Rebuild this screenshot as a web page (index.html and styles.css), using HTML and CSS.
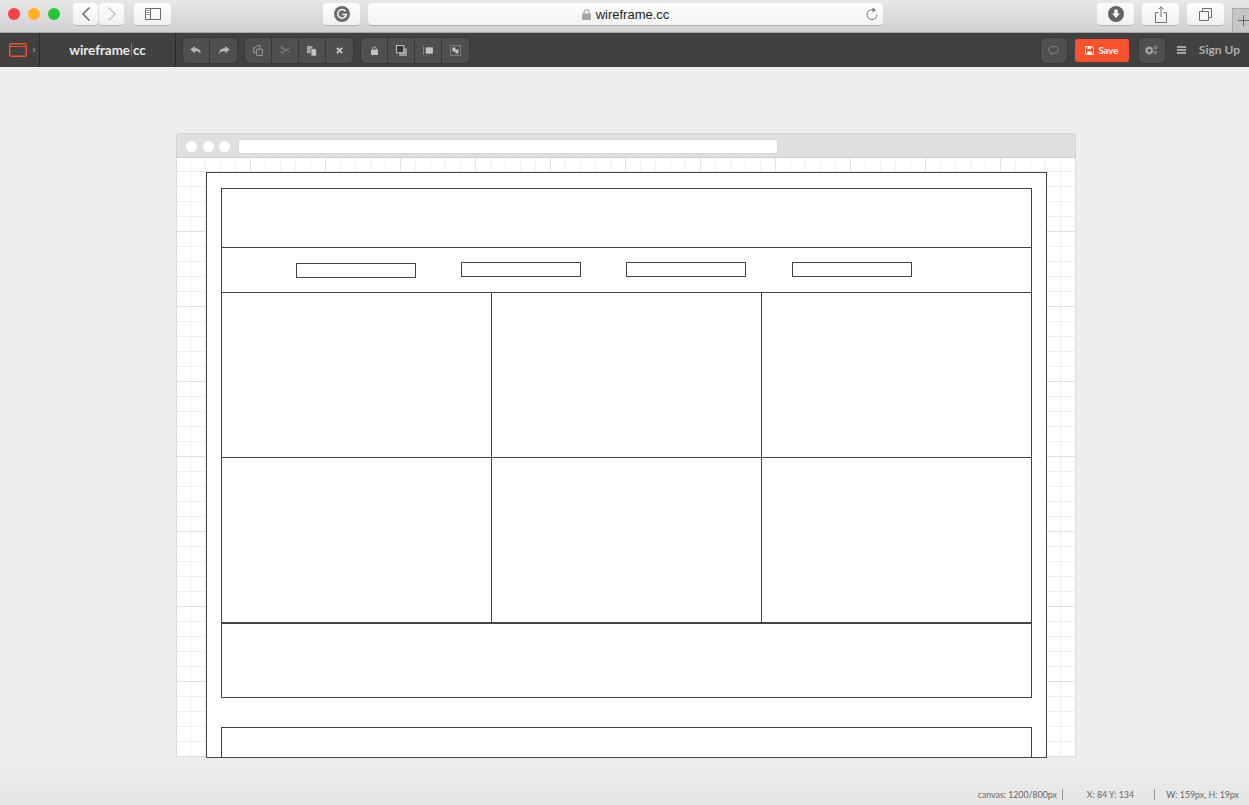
FILE: index.html
```html
<!DOCTYPE html>
<html lang="en">
<head>
  <meta charset="UTF-8">
  <title>wireframe.cc</title>
  <link rel="stylesheet" href="styles.css">
</head>
<body>
  <!-- safari chrome -->
  <header class="safari">
    <div class="lights">
      <span class="light red"></span>
      <span class="light yellow"></span>
      <span class="light green"></span>
    </div>
    <div class="nav-pair">
      <button class="sbtn nav-btn"><svg width="12" height="16" viewBox="0 0 12 16"><path d="M9.500 1.500 3 8l6.500 6.500" fill="none" stroke="#6e6e6e" stroke-width="1.500"/></svg></button>
      <button class="sbtn nav-btn"><svg width="12" height="16" viewBox="0 0 12 16"><path d="M2.500 1.500 9 8l-6.500 6.500" fill="none" stroke="#c4c4c4" stroke-width="1.500"/></svg></button>
    </div>
    <button class="sbtn wide sidebar-btn"><svg width="16" height="12" viewBox="0 0 16 12"><path d="M.5.5h15v11H.5zM5.500.5v11" fill="none" stroke="#6a6a6a"/><path d="M1.500 2.500h3M1.500 4.500h3M1.500 6.500h3" stroke="#8a8a8a"/></svg></button>
    <button class="sbtn wide g-btn"><svg width="16" height="16" viewBox="0 0 16 16"><circle cx="8" cy="8" r="8" fill="#6b6b6b"/><path d="M11.500 5.200A4.300 4.300 0 1 0 12.300 8.500H8.500" fill="none" stroke="#f4f4f4" stroke-width="1.500"/></svg></button>
    <div class="urlbar">
      <span class="url-text"><svg width="9" height="11" viewBox="0 0 9 11"><path d="M2 5V3.300a2.500 2.500 0 0 1 5 0V5" fill="none" stroke="#9c9c9c" stroke-width="1.100"/><rect y="4.500" width="9" height="6.500" rx=".8" fill="#a5a5a5"/></svg>wireframe.cc</span>
      <svg class="reload" width="12" height="14" viewBox="0 0 12 14"><path d="M8.700 3.400A5 5 0 1 0 11 7.500" fill="none" stroke="#777" stroke-width="1"/><path d="M6.500 0.500 10 3 6.500 5.500z" fill="#777"/></svg>
    </div>
    <div class="safari-right">
      <button class="sbtn wide"><svg width="16" height="16" viewBox="0 0 16 16"><circle cx="8" cy="8" r="8" fill="#636363"/><path d="M6.300 3.500h3.400v4h2.300L8 12 4 7.500h2.300z" fill="#f5f5f5"/></svg></button>
      <button class="sbtn wide"><svg width="12" height="17" viewBox="0 0 12 17"><path d="M3.500 6.500H.5v10h11v-10h-3" fill="none" stroke="#6e6e6e"/><path d="M6 11V1M3.500 3.300 6 .8l2.500 2.500" fill="none" stroke="#6e6e6e"/></svg></button>
      <button class="sbtn wide"><svg width="13" height="13" viewBox="0 0 13 13"><path d="M.5 3.500h9v9h-9z" fill="none" stroke="#6e6e6e"/><path d="M3.500 3V.5h9v9H10" fill="none" stroke="#6e6e6e"/></svg></button>
      <div class="new-tab"><svg width="11" height="11" viewBox="0 0 11 11"><path d="M5.500 0v11M0 5.500h11" stroke="#666" stroke-width="1"/></svg></div>
    </div>
  </header>

  <!-- app toolbar -->
  <nav class="toolbar">
    <div class="logo-cell">
      <svg width="18" height="14" viewBox="0 0 18 14"><rect x=".75" y=".75" width="16.500" height="12.500" rx="1.500" fill="none" stroke="#f0512e" stroke-width="1.500"/><path d="M1 3.500h16" stroke="#f0512e"/></svg>
      <span class="caret"></span>
    </div>
    <div class="brand">wireframe<span class="brand-bar"></span>cc</div>

    <div class="tool-group first">
      <button class="tool"><svg width="12" height="9" viewBox="0 0 13 10"><path d="M5.500 0 0 4l5.500 4V5.500c3 0 4.800.7 6 3.500.7-4-1.500-6.500-6-6.500z" fill="#b4b4b4"/></svg></button>
      <button class="tool"><svg width="12" height="9" viewBox="0 0 13 10"><path d="M7.500 0 13 4 7.500 8V5.500c-3 0-4.800.7-6 3.500-.7-4 1.500-6.500 6-6.500z" fill="#b4b4b4"/></svg></button>
    </div>
    <div class="tool-group">
      <button class="tool"><svg width="10" height="11" viewBox="0 0 11 12"><path d="M5 .5 2.500 3H.8v5.500h3M4 4.500h6.200v7H4z" fill="none" stroke="#a0a0a0"/><path d="M5 .5h2.500V4" fill="none" stroke="#a0a0a0"/></svg></button>
      <button class="tool"><svg width="11" height="8" viewBox="0 0 12 10"><circle cx="2" cy="2" r="1.500" fill="none" stroke="#8e8e8e"/><circle cx="2" cy="8" r="1.500" fill="none" stroke="#8e8e8e"/><path d="M3.300 3 12 8M3.300 7 12 2" stroke="#8e8e8e"/></svg></button>
      <button class="tool"><svg width="10" height="11" viewBox="0 0 11 12"><path d="M0 1h6v8H0z" fill="#a5a5a5"/><path d="M4.500 4H9l1.500 1.500V12h-6z" fill="#c4c4c4" stroke="#444" stroke-width=".6"/></svg></button>
      <button class="tool"><svg width="7" height="7" viewBox="0 0 8 8"><path d="M1 1l6 6M7 1 1 7" stroke="#c4c4c4" stroke-width="2.200"/></svg></button>
    </div>
    <div class="tool-group">
      <button class="tool"><svg width="7" height="9" viewBox="0 0 8 10"><path d="M2 4.500V2.800a2 2 0 0 1 4 0v1.700" fill="none" stroke="#c4c4c4" stroke-width="1.100"/><rect y="4" width="8" height="6" rx=".7" fill="#c4c4c4"/></svg></button>
      <button class="tool"><svg width="11" height="11" viewBox="0 0 12 12"><rect x="3.500" y="3.500" width="8.500" height="8.500" fill="#999"/><rect x=".5" y=".5" width="8" height="8" fill="#383838" stroke="#ccc"/></svg></button>
      <button class="tool"><svg width="10" height="9" viewBox="0 0 11 10"><path d="M.5 0v10" stroke="#bbb" stroke-dasharray="1 1"/><rect x="3" y="1.500" width="8" height="7" fill="#c4c4c4"/></svg></button>
      <button class="tool"><svg width="11" height="11" viewBox="0 0 11 11"><rect x=".5" y=".5" width="10" height="10" fill="none" stroke="#aaa" stroke-dasharray="1 1"/><path d="M2.500 2.500h3v2h3v4l-3 0v-2h-3z" fill="#c4c4c4"/></svg></button>
    </div>

    <div class="toolbar-right">
      <button class="tool-solo comment"><svg width="11" height="9" viewBox="0 0 12 10"><path d="M2.500 9c.8-.3 1-1 1-1.700C1.700 6.800.5 5.800.5 4.300.5 2.200 3 .5 6 .5s5.500 1.700 5.500 3.800S9 8 6 8C5 8.600 3.700 9.100 2.500 9z" fill="none" stroke="#8e8e8e"/></svg></button>
      <button class="save"><svg width="9" height="9" viewBox="0 0 9 9"><path d="M.5.5h6.300L8.500 2.200v6.300H.5z" fill="none" stroke="#fff"/><path d="M2.500 1v2h3.500V1z" fill="#fff"/><path d="M2 5.500h5v3H2z" fill="#fff"/></svg>Save</button>
      <button class="tool-solo gear"><svg width="13" height="10" viewBox="0 0 15 11"><circle cx="5" cy="6" r="3" fill="none" stroke="#aaa" stroke-width="2"/><circle cx="5" cy="6" r="4.500" fill="none" stroke="#aaa" stroke-dasharray="1.500 1.500"/><circle cx="12" cy="2.500" r="1.500" fill="none" stroke="#aaa"/><circle cx="12" cy="8.500" r="1.500" fill="none" stroke="#aaa"/></svg></button>
      <span class="hamburger"></span>
      <a class="signup">Sign Up</a>
    </div>
  </nav>

  <main class="stage">
    <div class="window">
      <div class="window-bar">
        <span class="dot"></span><span class="dot"></span><span class="dot"></span>
        <span class="window-url"></span>
      </div>
      <div class="canvas">
        <div class="box page"></div>
        <div class="box header"></div>
        <div class="box menu"></div>
        <div class="box link l1"></div>
        <div class="box link l2"></div>
        <div class="box link l3"></div>
        <div class="box link l4"></div>
        <div class="box cell c1 r1"></div>
        <div class="box cell c2 r1"></div>
        <div class="box cell c3 r1"></div>
        <div class="box cell c1 r2"></div>
        <div class="box cell c2 r2"></div>
        <div class="box cell c3 r2"></div>
        <div class="box footer"></div>
        <div class="box bottom"></div>
      </div>
    </div>
  </main>

  <footer class="status">
    <span class="stat s-canvas">canvas: 1200/800px</span>
    <span class="stat s-pos">X: 84 Y: 134</span>
    <span class="stat s-size">W: 159px, H: 19px</span>
  </footer>
</body>
</html>
```

FILE: styles.css
```css
* {
  box-sizing: border-box;
}
html, body {
  height: 100%;
}
body {
  margin: 0;
  display: flex;
  flex-direction: column;
  overflow: hidden;
  background: #eeeeee;
  font-family: Lato, sans-serif;
}
button {
  padding: 0;
  border: none;
  font: inherit;
  display: flex;
  align-items: center;
  justify-content: center;
}

/* safari bar */
.safari {
  height: 33px;
  flex: none;
  display: flex;
  align-items: flex-start;
  padding: 3px 0 0 8px;
  background: linear-gradient(#e9e7e9, #d1cfd1);
  border-bottom: 1px solid #a9a7a9;
}
.lights {
  display: flex;
  gap: 8px;
  margin-top: 5px;
  width: 65px;
}
.light {
  width: 12px;
  height: 12px;
  border-radius: 50%;
}
.red { background: #fc4242; }
.yellow { background: #fdb420; }
.green { background: #22c734; }
.sbtn {
  height: 22px;
  border-radius: 4px;
  background: linear-gradient(#fdfdfd, #f1f1f1);
  box-shadow: 0 1px 0 #b9b7b9;
}
.nav-pair {
  display: flex;
  gap: 1px;
}
.nav-btn {
  width: 25px;
}
.wide {
  width: 37px;
}
.sidebar-btn {
  margin-left: 10px;
}
.g-btn {
  margin-left: 152px;
}
.urlbar {
  width: 515px;
  height: 22px;
  margin-left: 8px;
  border-radius: 4px;
  background: linear-gradient(#fdfdfd, #f4f4f4);
  box-shadow: 0 1px 0 #b0aeb0;
  display: flex;
  align-items: center;
  justify-content: center;
  position: relative;
}
.url-text {
  display: flex;
  align-items: center;
  gap: 5px;
  font: 13px "Liberation Sans", sans-serif;
  color: #222;
}
.reload {
  position: absolute;
  right: 5px;
  top: 4px;
}
.safari-right {
  display: flex;
  gap: 8px;
  margin-left: 214px;
}
.new-tab {
  width: 17px;
  height: 24px;
  margin-top: 5px;
  background: #c6c4c6;
  border-left: 1px solid #aaa;
  border-top: 1px solid #aaa;
  display: flex;
  align-items: center;
  padding-left: 5px;
}

/* app toolbar */
.toolbar {
  height: 34px;
  flex: none;
  display: flex;
  align-items: center;
  background: #414141;
  color: #fff;
}
.logo-cell {
  width: 40px;
  height: 100%;
  flex: none;
  display: flex;
  align-items: center;
  padding-left: 9px;
  gap: 6px;
  border-right: 1px solid #2b2b2b;
}
.caret {
  border-left: 3px solid #777;
  border-top: 3px solid transparent;
  border-bottom: 3px solid transparent;
}
.brand {
  width: 136px;
  height: 100%;
  flex: none;
  display: flex;
  align-items: center;
  justify-content: center;
  border-right: 1px solid #2b2b2b;
  font-size: 13.400px;
  font-weight: 700;
  color: #e8e8e8;
}
.brand-bar {
  width: 1px;
  height: 14px;
  margin: 0 1px;
  background: #d9512f;
}
.tool-group {
  display: flex;
  height: 25px;
  margin-left: 8px;
  border-radius: 5px;
  background: #4f4f4f;
  box-shadow: 0 0 0 1px #383838;
}
.tool-group.first {
  margin-left: 7px;
}
.tool {
  width: 27px;
  height: 25px;
  background: none;
  border-right: 1px solid #383838;
}
.tool:last-child {
  border-right: none;
}
.toolbar-right {
  margin-left: auto;
  display: flex;
  align-items: center;
}
.tool-solo {
  width: 26px;
  height: 25px;
  border-radius: 5px;
  background: #4f4f4f;
  box-shadow: 0 0 0 1px #383838;
}
.save {
  width: 54px;
  height: 23px;
  margin: 0 10px 0 8px;
  gap: 4px;
  border-radius: 3px;
  background: #f9512c;
  color: #fff;
  font-size: 9.500px;
  font-weight: 700;
}
.hamburger {
  width: 9px;
  height: 8px;
  margin-left: 12px;
  border-top: 2px solid #a5a5a5;
  border-bottom: 2px solid #a5a5a5;
  position: relative;
}
.hamburger::after {
  content: "";
  position: absolute;
  left: 0;
  right: 0;
  top: 1px;
  height: 2px;
  background: #a5a5a5;
}
.signup {
  margin: 0 9px 2px 13px;
  font-size: 12px;
  font-weight: 700;
  color: #aeaeae;
}

/* wireframe window */
.stage {
  flex: 1;
  padding: 66px 0 0 176px;
  position: relative;
  z-index: 1;
}
.window {
  width: 900px;
}
.window-bar {
  height: 25px;
  display: flex;
  align-items: center;
  padding: 1px 0 0 9px;
  gap: 5.500px;
  background: #dfdfdf;
  border: 1px solid #d2d2d2;
  border-bottom-color: #cfcfcf;
  border-radius: 4px 4px 0 0;
}
.dot {
  width: 11px;
  height: 11px;
  border-radius: 50%;
  background: #fff;
}
.window-url {
  width: 540px;
  height: 15px;
  margin-left: 2.500px;
  border-radius: 3px;
  background: #fff;
  border: 1px solid #d8d8d8;
}
.canvas {
  position: relative;
  height: 599px;
  background-color: #fff;
  border: solid #dcdcdc;
  border-width: 0 1px 1px 1px;
  background-image:
    linear-gradient(90deg, #e1e1e1 1px, transparent 1px),
    linear-gradient(#e1e1e1 1px, transparent 1px),
    linear-gradient(90deg, #efefef 1px, transparent 1px),
    linear-gradient(#efefef 1px, transparent 1px);
  background-size: 75px 75px, 75px 75px, 15px 15px, 15px 15px;
  background-position: -2px -2px, -2px -2px, 13px 13px, 13px 13px;
}

/* boxes sit on the free canvas, offsets are relative to .canvas */
.box {
  position: absolute;
  background: #fff;
  border: 1px solid #444;
}
.page { left: 29px; top: 14px; width: 841px; height: 586px; }
.header { left: 44px; top: 30px; width: 811px; height: 60px; }
.menu { left: 44px; top: 89px; width: 811px; height: 46px; }
.link { width: 120px; height: 15px; top: 104px; }
.l1 { left: 119px; top: 105px; }
.l2 { left: 284px; }
.l3 { left: 449px; }
.l4 { left: 615px; }
.cell { width: 271px; height: 166px; }
.c1 { left: 44px; }
.c2 { left: 314px; }
.c3 { left: 584px; }
.r1 { top: 134px; }
.r2 { top: 299px; }
.footer { left: 44px; top: 464px; width: 811px; height: 76px; border-top-width: 2px; }
.bottom { left: 44px; top: 569px; width: 811px; height: 31px; }

/* status line */
.status {
  height: 48px;
  flex: none;
  position: relative;
  background: linear-gradient(#eeeeee, #e5e5e5);
  font-size: 8.800px;
  color: #666;
}
.stat {
  position: absolute;
  top: 32px;
  white-space: nowrap;
}
.s-canvas {
  right: 186px;
  padding-right: 5px;
  border-right: 1px solid #999;
}
.s-pos {
  right: 115px;
}
.s-size {
  right: 10px;
  padding-left: 11px;
  border-left: 1px solid #999;
}
```
